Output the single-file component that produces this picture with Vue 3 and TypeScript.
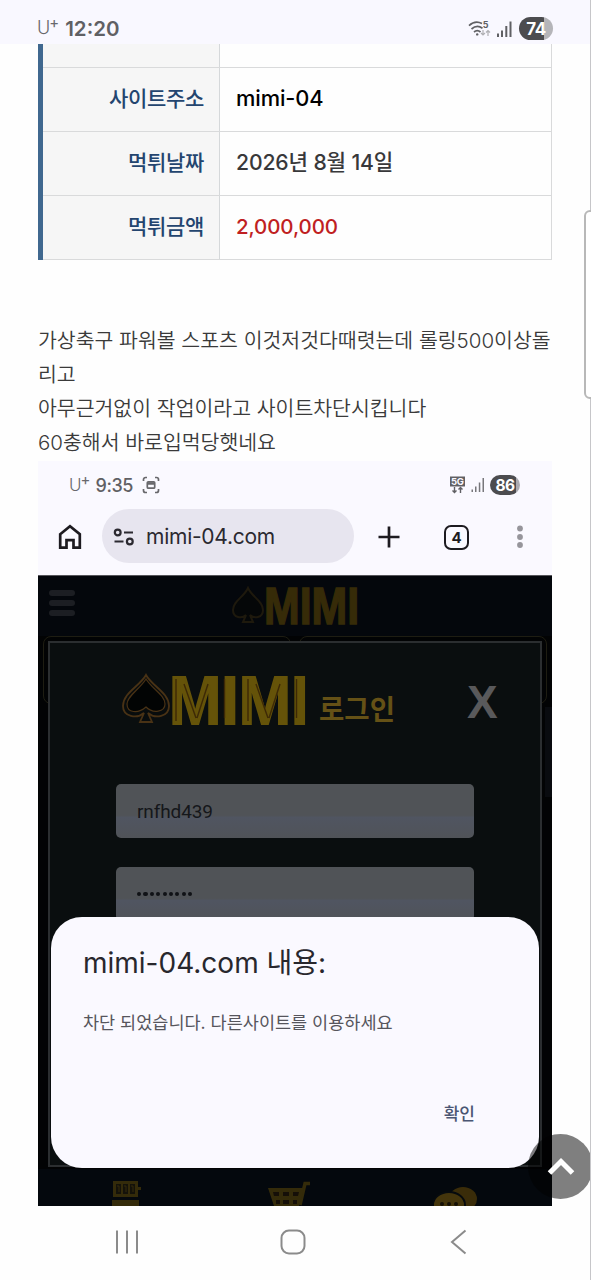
<script setup lang="ts">
interface Row {
  label: string
  value: string
  tone: string
}

const rows: Row[] = [
  { label: '사이트주소', value: 'mimi-04', tone: 'strong' },
  { label: '먹튀날짜', value: '2026년 8월 14일', tone: 'plain' },
  { label: '먹튀금액', value: '2,000,000', tone: 'amount' },
]
</script>

<template>
  <div class="phone">
    <header class="status">
      <div class="status-left">
        <span class="carrier">U<sup>+</sup></span>
        <span class="clock">12:20</span>
      </div>
      <div class="status-right">
        <svg class="wifi" width="26" height="20" viewBox="0 0 26 20" fill="none">
          <path d="M2 6.6C6.200 2.800 11.200 2.600 15 4.600M4.500 10C8 7 12 6.800 15.500 9.200M7 13C9 11.400 11.500 11.400 13.500 13" stroke="#606064" stroke-width="1.700" />
          <circle cx="10.200" cy="15.400" r="1.200" fill="#606064" />
          <text x="15.800" y="9" font-size="9" font-weight="700" fill="#606064">5</text>
          <path d="M16 11v5m-2-2 2 2 2-2M21 17v-5.500m-2 2 2-2 2 2" stroke="#b0b0b4" stroke-width="1.200" />
        </svg>
        <svg class="bars" width="17" height="18" viewBox="0 0 17 18">
          <path d="M1 13.500h2V17H1zM5 10.500h2V17H5zM9.300 6h2v11h-2zM13.500 1.500h2V17h-2z" fill="#606064" />
        </svg>
        <span class="battery battery-main">74</span>
      </div>
    </header>

    <main class="page">
      <section class="info">
        <div class="row row-cut"><div class="label"></div><div class="value"></div></div>
        <div v-for="row in rows" :key="row.label" class="row">
          <div class="label">{{ row.label }}</div>
          <div class="value" :class="row.tone">{{ row.value }}</div>
        </div>
      </section>

      <article class="post">
        <p>가상축구 파워볼 스포츠 이것저것다때렷는데 롤링500이상돌</p>
        <p>리고</p>
        <p>아무근거없이 작업이라고 사이트차단시킵니다</p>
        <p>60충해서 바로입먹당햇네요</p>
      </article>

      <section class="capture">
        <div class="inner-status">
          <div class="inner-left">
            <span class="carrier small">U<sup>+</sup></span>
            <span class="inner-clock">9:35</span>
            <svg width="18" height="18" viewBox="0 0 18 18" fill="none" stroke="#68686c" stroke-width="1.700">
              <path d="M1.500 5V3.500a2 2 0 0 1 2-2H5M13 1.500h1.500a2 2 0 0 1 2 2V5M16.500 13v1.500a2 2 0 0 1-2 2H13M5 16.500H3.500a2 2 0 0 1-2-2V13" />
              <rect x="5.300" y="5.800" width="7.400" height="6.400" rx="1" />
              <path d="M5 7.500h8" stroke-width="2.500" />
            </svg>
          </div>
          <div class="inner-right">
            <svg width="17" height="18" viewBox="0 0 17 18" fill="none">
              <rect x="1" y="0.500" width="15" height="10" fill="#606064" />
              <text x="2" y="8.800" font-size="9.500" font-weight="700" fill="#faf9ff" textLength="13">5G</text>
              <path d="M5.500 11v5.500m-2-2 2 2 2-2M11.500 17v-5.500m-2 2 2-2 2 2" stroke="#606064" stroke-width="1.400" />
            </svg>
            <svg width="14" height="16" viewBox="0 0 14 16">
              <path d="M.5 12.500H2V15H.500zM4 9.500h1.500V15H4zM7.800 5.500h1.500V15H7.800zM11.500 1h1.500v14h-1.500z" fill="#77777b" />
            </svg>
            <span class="battery battery-inner">86</span>
          </div>
        </div>

        <div class="toolbar">
          <svg class="home" width="24" height="26" viewBox="0 0 24 26" fill="none" stroke="#1d1b20" stroke-width="2.700">
            <path d="M2.200 10.200 12 2.300l9.800 7.900v13.500h-6.300v-7.500h-7v7.500H2.200z" />
          </svg>
          <div class="address">
            <svg width="22" height="18" viewBox="0 0 22 18" fill="none" stroke="#2b2930" stroke-width="2.200">
              <circle cx="4.700" cy="4.500" r="2.900" /><path d="M11 4.500h9M1.500 13.500h9" /><circle cx="16.800" cy="13.500" r="2.900" />
            </svg>
            <span>mimi-04.com</span>
          </div>
          <svg class="plus" width="24" height="24" viewBox="0 0 24 24" stroke="#1d1b20" stroke-width="2.700"><path d="M1.500 12h21M12 1.500v21" /></svg>
          <span class="tabs">4</span>
          <svg class="dots" width="8" height="24" viewBox="0 0 8 24" fill="#96959b"><circle cx="4" cy="3.500" r="2.900" /><circle cx="4" cy="12" r="2.900" /><circle cx="4" cy="20" r="2.900" /></svg>
        </div>

        <div class="site">
          <div class="site-head">
            <svg class="menu" width="28" height="27" viewBox="0 0 28 27" fill="#1c1e23"><rect y="0" x="1" width="26" height="6" rx="3" /><rect x="1" y="10" width="26" height="6" rx="3" /><rect x="1" y="20" width="26" height="6" rx="3" /></svg>
            <svg class="logo-small" width="132" height="48" viewBox="0 0 132 48">
              <path d="M17 7C13 16 2 20 2 29c0 8 9 9 13 5l-3 7h10l-3-7c4 4 13 3 13-5 0-9-11-13-15-22z" fill="#050708" stroke="#1e190d" stroke-width="2" />
              <text transform="translate(33 43) scale(.84 1)" class="logo-text" font-size="51" fill="#362b08" stroke="#362b08" stroke-width="1.500">MIMI</text>
            </svg>
          </div>
          <div class="banners"><span></span><span></span></div>
          <i class="side-strip"></i>

          <div class="login">
            <div class="login-head">
              <svg width="280" height="60" viewBox="0 0 280 60">
                <path d="M26 7C20 18 3 25 3 38c0 11 14 13 21 7l-4 9h12l-4-9c7 6 21 4 21-7 0-13-17-20-23-31z" fill="#080c0d" stroke="#493215" stroke-width="1.800" />
                <path d="M26 11C20 21 7 28 7 36c0 9 11 10 19 3 7 7 19 5 19-3 0-9-13-15-19-25z" fill="#020404" stroke="#493215" stroke-width="1.200" />
                <text transform="translate(49 55.500) scale(.91 1)" class="logo-text" font-size="69" fill="#655309" stroke="#655309" stroke-width="1.800">MIMI</text>
                <path d="M56 11v42M104.500 11v39M128 11v42M176.500 11v39M64 16l12 34M88 16 77 50M136 16l12 34M160 16l-11 34" fill="none" stroke="#3d2906" stroke-width="1.400" />
                <text x="199" y="51.500" class="logo-kr" font-size="28.500" fill="#655116" textLength="76" lengthAdjust="spacingAndGlyphs">로그인</text>
              </svg>
              <span class="close">X</span>
            </div>
            <div class="field">rnfhd439</div>
            <div class="field password"><i v-for="n in 9" :key="n"></i></div>
          </div>

          <div class="site-foot">
            <svg width="32" height="26" viewBox="0 0 32 26">
              <path d="M3 1h25v16H3zM28 7h3v3h-3zM2 20h27v6H2z" fill="#342b0a" />
              <path d="M6 4h5v10H6zM13 4h5v10h-5zM20 4h5v10h-5z" fill="#14120a" />
              <path d="M7 6h2v6M14 6h2v6M21 6h2v6" stroke="#342b0a" fill="none" />
            </svg>
            <svg width="44" height="26" viewBox="0 0 44 26">
              <path d="M43 3.500h-5L33 25" fill="none" stroke="#342b0a" stroke-width="3.500" />
              <path d="M1 8h36l-5 18H7z" fill="#342b0a" />
              <path d="M6 12h6v4H7zM16 12h6v4h-6zM26 12h6l-1 4h-5zM9 20h4v4h-4zM16 20h6v4h-6zM26 20h4v4h-4z" fill="#150f08" />
            </svg>
            <svg width="46" height="26" viewBox="0 0 46 26">
              <ellipse cx="31" cy="19" rx="14" ry="12" fill="#3a2c09" />
              <ellipse cx="17" cy="25" rx="16" ry="13" fill="#44350c" stroke="#060a0e" stroke-width="2" />
              <circle cx="10" cy="24" r="2" fill="#151006" /><circle cx="17" cy="24" r="2" fill="#151006" /><circle cx="24" cy="24" r="2" fill="#151006" />
            </svg>
          </div>

          <div class="dialog">
            <h2>mimi-04.com 내용:</h2>
            <p>차단 되었습니다. 다른사이트를 이용하세요</p>
            <button type="button">확인</button>
          </div>
        </div>
      </section>
    </main>

    <nav class="nav">
      <svg width="26" height="26" viewBox="0 0 26 26" stroke="#8b8b8b" stroke-width="2"><path d="M2 1.500v23M12 1.500v23M22 1.500v23" /></svg>
      <svg width="26" height="26" viewBox="0 0 26 26" fill="none" stroke="#8b8b8b" stroke-width="2"><rect x="1.500" y="1.500" width="23" height="23" rx="7.500" /></svg>
      <svg width="18" height="26" viewBox="0 0 18 26" fill="none" stroke="#8b8b8b" stroke-width="2"><path d="M15.500 1.500 2 13l13.500 11.500" /></svg>
    </nav>

    <div class="to-top">
      <svg width="28" height="20" viewBox="0 0 28 20" fill="none" stroke="#fff" stroke-width="5"><path d="M2.500 16 14 4.500 25.500 16" /></svg>
    </div>
    <i class="edge-line"></i>
    <i class="edge-handle"></i>
  </div>
</template>

<style>
html, body { background: #fff; overflow: hidden; }
</style>

<style scoped>
* { box-sizing: border-box; }
.phone { position: relative; width: 591px; height: 1280px; overflow: hidden; display: flex; flex-direction: column; background: #fefefe; font-family: Inter, "Noto Sans CJK KR", sans-serif; color: #3a3a3a; }
p, h2 { margin: 0; white-space: nowrap; }
svg { display: block; flex: none; overflow: visible; }
.status { height: 44px; flex: none; background: #f9f8ff; display: flex; justify-content: space-between; padding: 16px 38px 0 37px; }
.status-left { display: flex; align-items: center; height: 24px; gap: 6px; }
.carrier { font-size: 18px; color: #68686c; font-weight: 300; line-height: 24px; display: flex; font-family: Inter, sans-serif; }
.carrier sup { font-size: 15px; line-height: 14px; font-weight: 400; margin-left: -1px; }
.clock { font-size: 20.500px; font-weight: 600; color: #606064; }
.status-right { display: flex; align-items: center; height: 25px; }
.bars { margin-left: 3px; }
.battery { color: #fff; font-weight: 700; display: flex; align-items: center; justify-content: center; border-radius: 20px; letter-spacing: -.5px; }
.battery-main { width: 34px; height: 23px; font-size: 17px; margin-left: 6px; background: linear-gradient(90deg, #4c4c4f 73%, #b5b5b9 73%); }
.battery-inner { width: 30px; height: 20px; font-size: 15.500px; margin-left: 5px; background: linear-gradient(90deg, #4c4c4f 86%, #aaaab0 86%); }
.page { width: 514px; margin-left: 38px; flex: none; height: 1162px; display: flex; flex-direction: column; }
.info { border-left: 5px solid #40688f; border-right: 1px solid #d9dadb; height: 216px; }
.row { display: grid; grid-template-columns: 177px 1fr; height: 64px; border-bottom: 1px solid #d9dadb; }
.row-cut { height: 24px; }
.label { background: #f6f6f6; border-right: 1px solid #d5d8da; color: #24456f; font-size: 21px; font-weight: 500; letter-spacing: -.3px; text-align: right; padding-right: 15px; line-height: 61px; }
.value { padding-left: 16px; font-size: 21.200px; font-weight: 450; letter-spacing: -.1px; line-height: 61px; color: #38383a; white-space: pre; }
.plain { letter-spacing: -.15px; }
.strong { color: #000; font-size: 21.800px; }
.amount { color: #c01f22; font-size: 20.500px; letter-spacing: -.1px; }
.post { height: 201px; padding-top: 64px; font-size: 20.500px; line-height: 34px; font-weight: 350; letter-spacing: -.02px; }
.capture { height: 745px; display: flex; flex-direction: column; background: #faf9ff; }
.inner-status { height: 48px; flex: none; display: flex; justify-content: space-between; align-items: center; padding: 0 32px 0 31px; }
.inner-left, .inner-right { display: flex; align-items: center; }
.small { font-size: 17px; }
.inner-clock { font-size: 18px; font-weight: 550; letter-spacing: -.4px; color: #606064; margin: 0 9px 0 5px; }
.inner-right svg + svg { margin-left: 5px; }
.toolbar { height: 66px; flex: none; display: flex; align-items: flex-start; padding-left: 20px; }
.home { margin-top: 15px; }
.address { width: 252px; height: 54px; margin-left: 20px; border-radius: 27px; background: #e7e5ef; display: flex; align-items: center; gap: 11px; padding: 1px 0 0 11px; color: #2b2930; font-size: 21px; letter-spacing: -.25px; }
.plus { margin: 16px 0 0 23px; }
.tabs { width: 25px; height: 25px; margin: 16px 0 0 43px; border: 2.500px solid #1d1b20; border-radius: 7px; font-size: 15px; font-weight: 700; color: #1d1b20; display: flex; align-items: center; justify-content: center; }
.dots { margin: 16px 0 0 47px; }
.site { position: relative; flex: 1; background: #020304; border-top: 1px solid #55555a; overflow: hidden; }
.site-head { height: 60px; background: #04070c; display: flex; align-items: flex-start; }
.menu { margin: 14px 0 0 10px; }
.logo-small { margin: 5px 0 0 155px; }
.logo-text { font-family: "Liberation Sans", sans-serif; font-weight: 700; }
.logo-kr { font-family: "Noto Sans CJK KR", sans-serif; font-weight: 700; }
.banners { display: flex; gap: 8px; padding: 0 5px; }
.banners span { flex: 1; height: 68px; border: 1px solid #1e1d12; border-radius: 8px; }
.side-strip { position: absolute; right: 0; top: 131px; width: 7px; height: 90px; background: #090b0f; }
.login { position: absolute; left: 10px; top: 65px; width: 494px; height: 526px; border: 2px solid #2b2e30; background: #0a0e0f; }
.login-head { height: 141px; display: flex; padding: 25px 0 0 70px; }
.close { font: 700 46px/68px "Liberation Sans", sans-serif; color: #59595b; margin-left: 67px; }
.field { width: 358px; height: 54px; margin: 0 0 29px 66px; border-radius: 5px; background: linear-gradient(#505357 58%, #505561 62%, #505358); color: #15171b; font: 400 19px/55px Roboto, sans-serif; letter-spacing: -.1px; padding-left: 21px; }
.password { display: flex; gap: 2.200px; padding-top: 25px; }
.password i { width: 4.200px; height: 4.200px; border-radius: 50%; background: #101216; }
.site-foot { position: absolute; left: 0; right: 0; bottom: 0; height: 37px; background: #04080d; display: flex; align-items: flex-end; padding-left: 72px; }
.site-foot svg:nth-child(2) { margin-left: 125px; }
.site-foot svg:nth-child(3) { margin-left: 121px; }
.site-foot svg { overflow: hidden; }
.dialog { position: absolute; left: 13px; top: 341px; width: 488px; height: 251px; border-radius: 31px; background: #faf9ff; padding: 28px 32px 0; }
h2 { font-size: 28px; line-height: 36px; font-weight: 400; letter-spacing: 0; color: #28272d; }
.dialog p { margin-top: 30px; font-size: 17.500px; line-height: 24px; color: #56555c; }
.dialog button { border: 0; background: none; padding: 0; margin: 65px 32px 0 auto; display: block; color: #4a5673; font: 500 17px/26px "Noto Sans CJK KR", sans-serif; }
.nav { flex: 1; display: flex; align-items: flex-start; padding: 23px 0 0 115px; }
.nav svg:nth-child(2) { margin-left: 138.500px; }
.nav svg:nth-child(3) { margin-left: 144px; }
.to-top { position: absolute; left: 528px; top: 1134px; width: 65px; height: 65px; border-radius: 50%; background: rgba(0, 0, 0, .5); display: flex; align-items: center; justify-content: center; }
.edge-line { position: absolute; right: 0; top: 0; width: 1px; height: 100%; background: #c6c6c9; }
.edge-handle { position: absolute; left: 584px; top: 210px; width: 12px; height: 189px; border: 2px solid #b8b8b8; border-radius: 7px; background: #fff; }
</style>
